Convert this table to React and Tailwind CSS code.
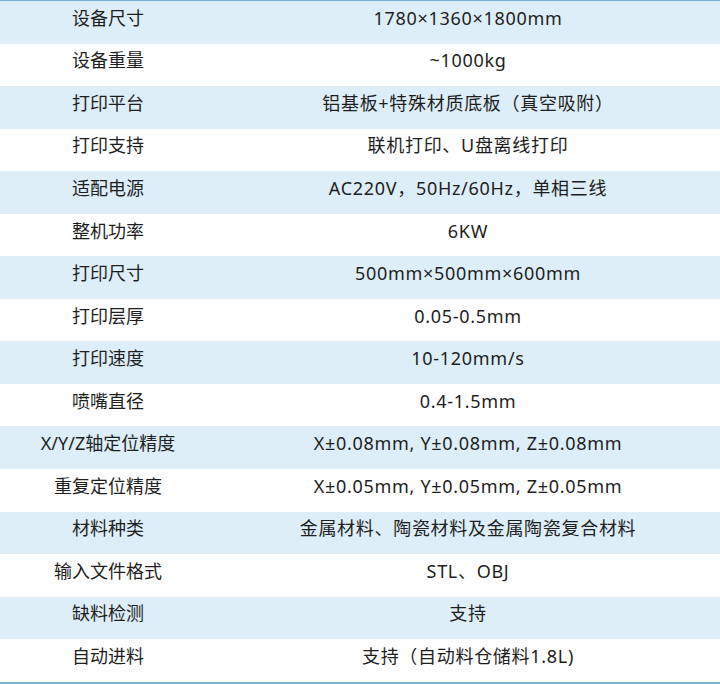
const rows = [
  ["设备尺寸", "1780×1360×1800mm"],
  ["设备重量", "~1000kg"],
  ["打印平台", "铝基板+特殊材质底板（真空吸附）"],
  ["打印支持", "联机打印、U盘离线打印"],
  ["适配电源", "AC220V，50Hz/60Hz，单相三线"],
  ["整机功率", "6KW"],
  ["打印尺寸", "500mm×500mm×600mm"],
  ["打印层厚", "0.05-0.5mm"],
  ["打印速度", "10-120mm/s"],
  ["喷嘴直径", "0.4-1.5mm"],
  ["X/Y/Z轴定位精度", "X±0.08mm, Y±0.08mm, Z±0.08mm"],
  ["重复定位精度", "X±0.05mm, Y±0.05mm, Z±0.05mm"],
  ["材料种类", "金属材料、陶瓷材料及金属陶瓷复合材料"],
  ["输入文件格式", "STL、OBJ"],
  ["缺料检测", "支持"],
  ["自动进料", "支持（自动料仓储料1.8L)"],
];

export default function App() {
  return (
    <div
      className="w-[720px] h-[684px] bg-white border-t border-[#6fb3de] border-b-2 border-b-[#7ab4c8] text-[#1e1e1e] text-[18px] leading-[24px]"
      style={{ fontFamily: '"Noto Sans", "Noto Sans CJK SC", sans-serif' }}
    >
      {rows.map(([k, v], i) => (
        <div
          key={k}
          className={`flex items-center pb-[9px] h-[42.56px] ${i % 2 === 0 ? "bg-[#ddeef9]" : "bg-white"}`}
        >
          <div className="w-[216px] text-center">{k}</div>
          <div className="flex-1 text-center tracking-[0.7px]">{v}</div>
        </div>
      ))}
    </div>
  );
}
